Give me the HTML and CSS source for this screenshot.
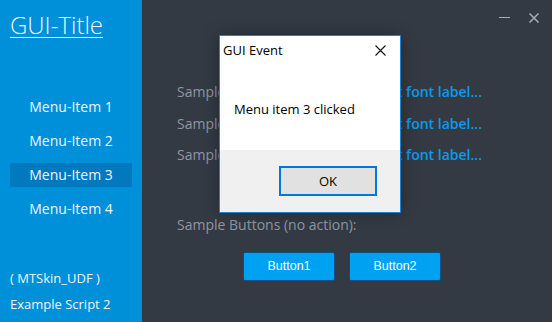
FILE: index.html
```html
<html lang="en">
<head>
    <meta charset="UTF-8">
    <title>GUI-Title</title>
    <link rel="stylesheet" href="styles.css">
</head>
<body>

<div class="window">
    <!-- Left side menu -->
    <div class="sidebar">
        <div class="app-title">GUI-Title</div>

        <div class="menu">
            <div class="menu-item">Menu-Item 1</div>
            <div class="menu-item">Menu-Item 2</div>
            <div class="menu-item selected">Menu-Item 3</div>
            <div class="menu-item">Menu-Item 4</div>
        </div>

        <div class="sidebar-footer">
            <div>( MTSkin_UDF )</div>
            <div>Example Script 2</div>
        </div>
    </div>

    <!-- Main content -->
    <div class="content">
        <div class="window-controls">
            <span class="ctrl-min"></span>
            <svg class="ctrl-close" width="10" height="10" viewBox="0 0 10 10"><path d="M0.5 0.5 L9.5 9.5 M9.5 0.5 L0.5 9.5" stroke="#a8adb5" stroke-width="1.5" fill="none"/></svg>
        </div>

        <div class="labels">
            <div class="label-row">
                <span class="gray-label">Sample Label 1:</span>
                <span class="blue-label">Light font label...</span>
            </div>
            <div class="label-row">
                <span class="gray-label">Sample Label 2:</span>
                <span class="blue-label">Light font label...</span>
            </div>
            <div class="label-row">
                <span class="gray-label">Sample Label 3:</span>
                <span class="blue-label">Light font label...</span>
            </div>
        </div>

        <div class="buttons-title">Sample Buttons (no action):</div>
        <div class="buttons">
            <button class="skin-btn">Button1</button>
            <button class="skin-btn">Button2</button>
        </div>
    </div>

    <!-- Message box on top -->
    <div class="msgbox">
        <div class="msgbox-title">
            <span>GUI Event</span>
            <span class="msgbox-x">
                <svg width="11" height="11" viewBox="0 0 11 11"><path d="M0.5 0.5 L10.5 10.5 M10.5 0.5 L0.5 10.5" stroke="#111" stroke-width="1.1" fill="none"/></svg>
            </span>
        </div>
        <div class="msgbox-body">Menu item 3 clicked</div>
        <div class="msgbox-footer">
            <button class="ok-btn">OK</button>
        </div>
    </div>
</div>

</body>
</html>
```

FILE: styles.css
```css
body {
    margin: 0;
    font-family: "Open Sans", "Noto Sans", sans-serif;
    background-color: #343a44;
}

.window {
    position: relative;
    display: flex;
    width: 552px;
    height: 322px;
    overflow: hidden;
}

/* Sidebar */
.sidebar {
    width: 142px;
    background-color: #008fd9;
    color: #eef6fc;
    display: flex;
    flex-direction: column;
}

.app-title {
    margin: 9px 0 0 10px;
    font-size: 24px;
    font-weight: 300;
    line-height: 32px;
    text-decoration: underline;
    text-decoration-thickness: 1px;
    text-underline-offset: 3px;
}

.menu {
    margin-top: 54px;
}

.menu-item {
    margin: 0 10px 10px;
    height: 24px;
    line-height: 24px;
    text-align: center;
    font-size: 14px;
}

.menu-item.selected {
    background-color: #0079bf;
}

.sidebar-footer {
    margin: auto 0 5px 10px;
    font-size: 13px;
    line-height: 26px;
}

/* Main area */
.content {
    flex: 1;
    display: flex;
    flex-direction: column;
    padding-left: 35px;
    color: #8e96a2;
}

.window-controls {
    display: flex;
    justify-content: flex-end;
    align-items: center;
    gap: 19px;
    height: 35px;
    padding-right: 13px;
}

.ctrl-min {
    width: 11px;
    height: 1px;
    background-color: #a8adb5;
}

.labels {
    margin-top: 46px;
}

.label-row {
    display: flex;
    justify-content: space-between;
    width: 305px;
    height: 31.5px;
    font-size: 14px;
    line-height: 22px;
}

.blue-label {
    color: #0a9bea;
    font-weight: 600;
}

.buttons-title {
    margin-top: 38px;
    font-size: 14px;
    line-height: 22px;
}

.buttons {
    display: flex;
    gap: 14px;
    margin: 16px 0 0 66px;
}

.skin-btn {
    width: 92px;
    height: 29px;
    background-color: #00a1f1;
    border: 1px solid #0b4f86;
    border-radius: 2px;
    color: #fff;
    font-family: "Liberation Sans", Arial, sans-serif;
    font-size: 12.5px;
}

/* Message box */
.msgbox {
    position: absolute;
    left: 219px;
    top: 35px;
    width: 180px;
    height: 176px;
    border: 1px solid #1883d7;
    background-color: #fff;
    box-shadow: 0 0 14px rgba(0, 0, 0, 0.35);
    display: flex;
    flex-direction: column;
    color: #000;
    font-size: 13px;
}

.msgbox-title {
    display: flex;
    justify-content: space-between;
    align-items: center;
    height: 28px;
    padding: 0 14px 0 3px;
}

.msgbox-x {
    display: flex;
}

.msgbox-body {
    height: 86px;
    padding-left: 14px;
    line-height: 90px;
}

.msgbox-footer {
    flex: 1;
    background-color: #f0f0f0;
    display: flex;
    justify-content: flex-end;
    align-items: center;
    padding-right: 23px;
}

.ok-btn {
    width: 98px;
    height: 30px;
    border: 2px solid #0078d7;
    background-color: #e1e1e1;
    font-family: "Open Sans", "Noto Sans", sans-serif;
    font-size: 13px;
    color: #000;
}
```
